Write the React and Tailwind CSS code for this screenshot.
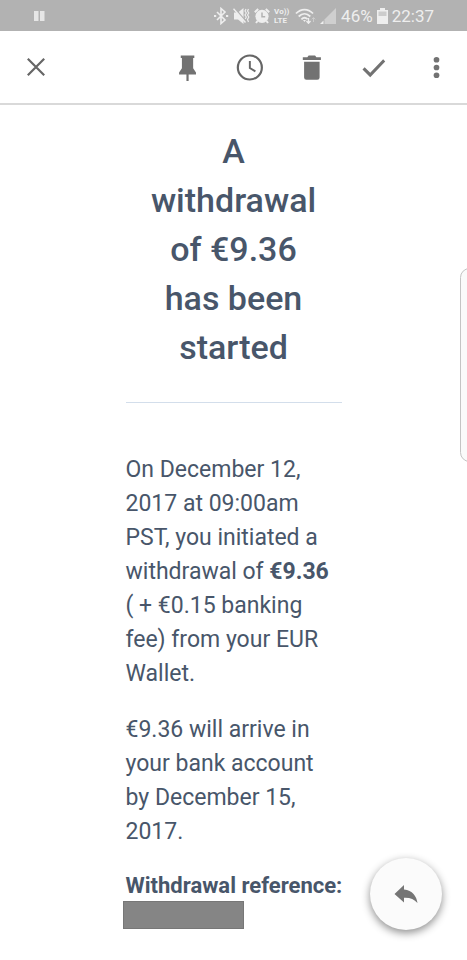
import React from "react";

function ToolButton({ label, children }) {
  return (
    <button type="button" aria-label={label} className="flex h-full w-[62px] items-center justify-center">
      <svg viewBox="0 0 24 24" className="size-[31px] fill-[#727272]" aria-hidden="true">
        {children}
      </svg>
    </button>
  );
}

function StatusBar() {
  return (
    <div className="flex h-[31px] items-center justify-between bg-[#b2b2b2] pr-[33px] pl-[34px] text-[#eeeeee]">
      <svg viewBox="0 0 11 10" className="h-[10px] w-[11px] fill-[#e6e6e6]" aria-label="Paused">
        <path d="M0 0h4.500v10H0zM6 0h4.500v10H6z" />
      </svg>
      <div className="flex items-center gap-1">
        <svg viewBox="0 0 16 18" className="h-[18px] w-4" fill="none" stroke="currentColor" strokeWidth="1.600" aria-label="Bluetooth">
          <path d="M4 5l8 8-4 3.500V1.500L12 5l-8 8" />
          <path d="M1 9h2.200M13 9h2.200" strokeWidth="2.200" />
        </svg>
        <svg viewBox="0 0 17 16" className="h-4 w-[17px]" aria-label="Vibrate">
          <path d="M1 4.500h4L10.500 0v16L5 11.500H1z" fill="currentColor" />
          <path d="M1.500 0L13 13.500" stroke="#b2b2b2" strokeWidth="1.500" />
          <path d="M.5 .8l12 13.700" stroke="currentColor" strokeWidth="1.500" />
          <path d="M13 1l-1 2 1.300 2-1.300 2 1.300 2-1 2M15.500 1l-1 2 1.300 2-1.300 2 1.300 2-1.300 2.500 1 2.500" fill="none" stroke="currentColor" strokeWidth="1.200" />
        </svg>
        <svg viewBox="0 0 16 16" className="size-4" aria-label="Alarm">
          <path d="M.8 4.200L4.200 1M15.200 4.200L11.800 1M3.500 13l-1.500 2M12.500 13l1.500 2" stroke="currentColor" strokeWidth="2" />
          <circle cx="8" cy="8.300" r="6.600" fill="currentColor" />
          <path d="M8 4.500v4.200h3.200" fill="none" stroke="#b2b2b2" strokeWidth="1.500" />
        </svg>
        <div className="flex w-[17px] flex-col font-['Roboto',sans-serif] text-[8px] leading-[9px] font-bold">
          <span className="whitespace-nowrap">Vo))</span>
          <span>LTE</span>
        </div>
        <svg viewBox="0 0 21 16" className="h-4 w-[21px]" aria-label="Wi-Fi">
          <path d="M1 5.500C6 .2 13 .2 18 5.500M3.700 8.500c3.600-3.600 8-3.600 11.600 0M6.400 11.300c2-2 4.200-2 6.200-.2" fill="none" stroke="currentColor" strokeWidth="1.800" />
          <path d="M8 12h3l-1.500 2z" fill="currentColor" />
          <path d="M13.500 10v5M11.500 13l2 2.300 2-2.300" fill="none" stroke="currentColor" strokeWidth="1.300" />
          <path d="M18.500 14V10M16.800 11.300l1.700-1.800 1.700 1.800" fill="none" stroke="#cccccc" strokeWidth="1" />
        </svg>
        <svg viewBox="0 0 16 16" className="size-4" aria-label="Signal">
          <path d="M16 0v16H4.500v-4.500z" fill="#cfcfcf" />
          <path d="M3.500 12.500V16H0z" fill="currentColor" />
        </svg>
        <span className="pl-px font-['Roboto',sans-serif] text-[17px] leading-5">46%</span>
        <svg viewBox="0 0 11 16" className="h-4 w-[11px]" aria-label="Battery">
          <path d="M3 0h5v2h3v14H0V2h3z" fill="currentColor" />
          <path d="M1.500 3.500h8v4.500h-8z" fill="#cccccc" />
        </svg>
        <span className="font-['Roboto',sans-serif] text-[17px] leading-5">22:37</span>
      </div>
    </div>
  );
}

function Toolbar() {
  return (
    <header className="flex h-[74px] items-center justify-between border-b-2 border-[#d9d9d9] bg-white">
      <button type="button" aria-label="Close" className="flex h-full w-[72px] items-center justify-center">
        <svg viewBox="0 0 18 18" className="size-[18px]" fill="none" stroke="#666666" strokeWidth="2.200" aria-hidden="true">
          <path d="M.8.8l16.400 16.400M17.200.8L.8 17.200" />
        </svg>
      </button>
      <div className="flex h-full">
        <ToolButton label="Pin">
          <path d="M6 2.700h10.500v1.900h-.9v7.900l2.200 3.300v1.700h-5.700v5h-1.700v-5H4.700v-1.700l2.200-3.300V4.600H6z" />
        </ToolButton>
        <ToolButton label="Snooze">
          <circle cx="11.500" cy="12" r="9.300" fill="none" stroke="#666666" strokeWidth="1.700" />
          <path d="M11.500 7v5.400l4.300 2.600" fill="none" stroke="#666666" strokeWidth="1.500" />
        </ToolButton>
        <ToolButton label="Delete">
          <path d="M5.500 7.500h12v12.200a1.800 1.800 0 0 1-1.800 1.800H7.300a1.800 1.800 0 0 1-1.800-1.800zM4.500 4h3.500l1-1.200h5L15 4h3.500v2.200h-14z" />
        </ToolButton>
        <ToolButton label="Done">
          <path d="M8.700 19.500l-6-6 1.700-1.700 4.300 4.300L18.700 5.600l1.600 1.700z" />
        </ToolButton>
        <ToolButton label="More options">
          <circle cx="12" cy="6" r="2.200" />
          <circle cx="12" cy="12" r="2.200" />
          <circle cx="12" cy="18" r="2.200" />
        </ToolButton>
      </div>
    </header>
  );
}

export default function App() {
  return (
    <div className="relative min-h-screen overflow-hidden bg-white font-['Roboto',sans-serif] text-[#48566a]">
      <StatusBar />
      <Toolbar />
      <main className="mx-auto w-[216px] pt-[22px]">
        <h1 className="px-5 text-center text-[34px] leading-[49px] font-medium">
          A withdrawal of €9.36 has been started
        </h1>
        <div role="separator" className="mt-[30px] mb-[50px] h-px bg-[#d3deeb]" />
        <div className="text-[23px] leading-[34px]">
          <p>
            On December 12, 2017 at 09:00am PST, you initiated a withdrawal of <b>€9.36</b> ( + €0.15 banking fee) from
            your EUR Wallet.
          </p>
          <p className="mt-[22px]">€9.36 will arrive in your bank account by December 15, 2017.</p>
          <h2 className="mt-[22px] text-[22px] leading-[30px] font-bold whitespace-nowrap">Withdrawal reference:</h2>
          <div className="-ml-[3px] h-7 w-[121px] border border-[#777777] bg-[#858585]" />
        </div>
      </main>
      <div className="absolute top-[268px] -right-3 h-[194px] w-[19px] rounded-[10px] border border-[#c4c4c4] bg-[#fafafa]" />
      <button
        type="button"
        aria-label="Reply"
        className="fixed right-[25px] bottom-[30px] flex size-[72px] items-center justify-center rounded-full bg-[#fbfbfb] shadow-[0_3px_9px_rgba(0,0,0,0.45)]"
      >
        <svg viewBox="0 0 24 20" className="h-5 w-6 fill-[#757575]" aria-hidden="true">
          <path d="M10 5.500V1L.5 10l9.500 8.500v-4.800c6-.3 10 1.300 13.500 5.300C22.500 12 18.500 6.500 10 5.500z" />
        </svg>
      </button>
    </div>
  );
}
